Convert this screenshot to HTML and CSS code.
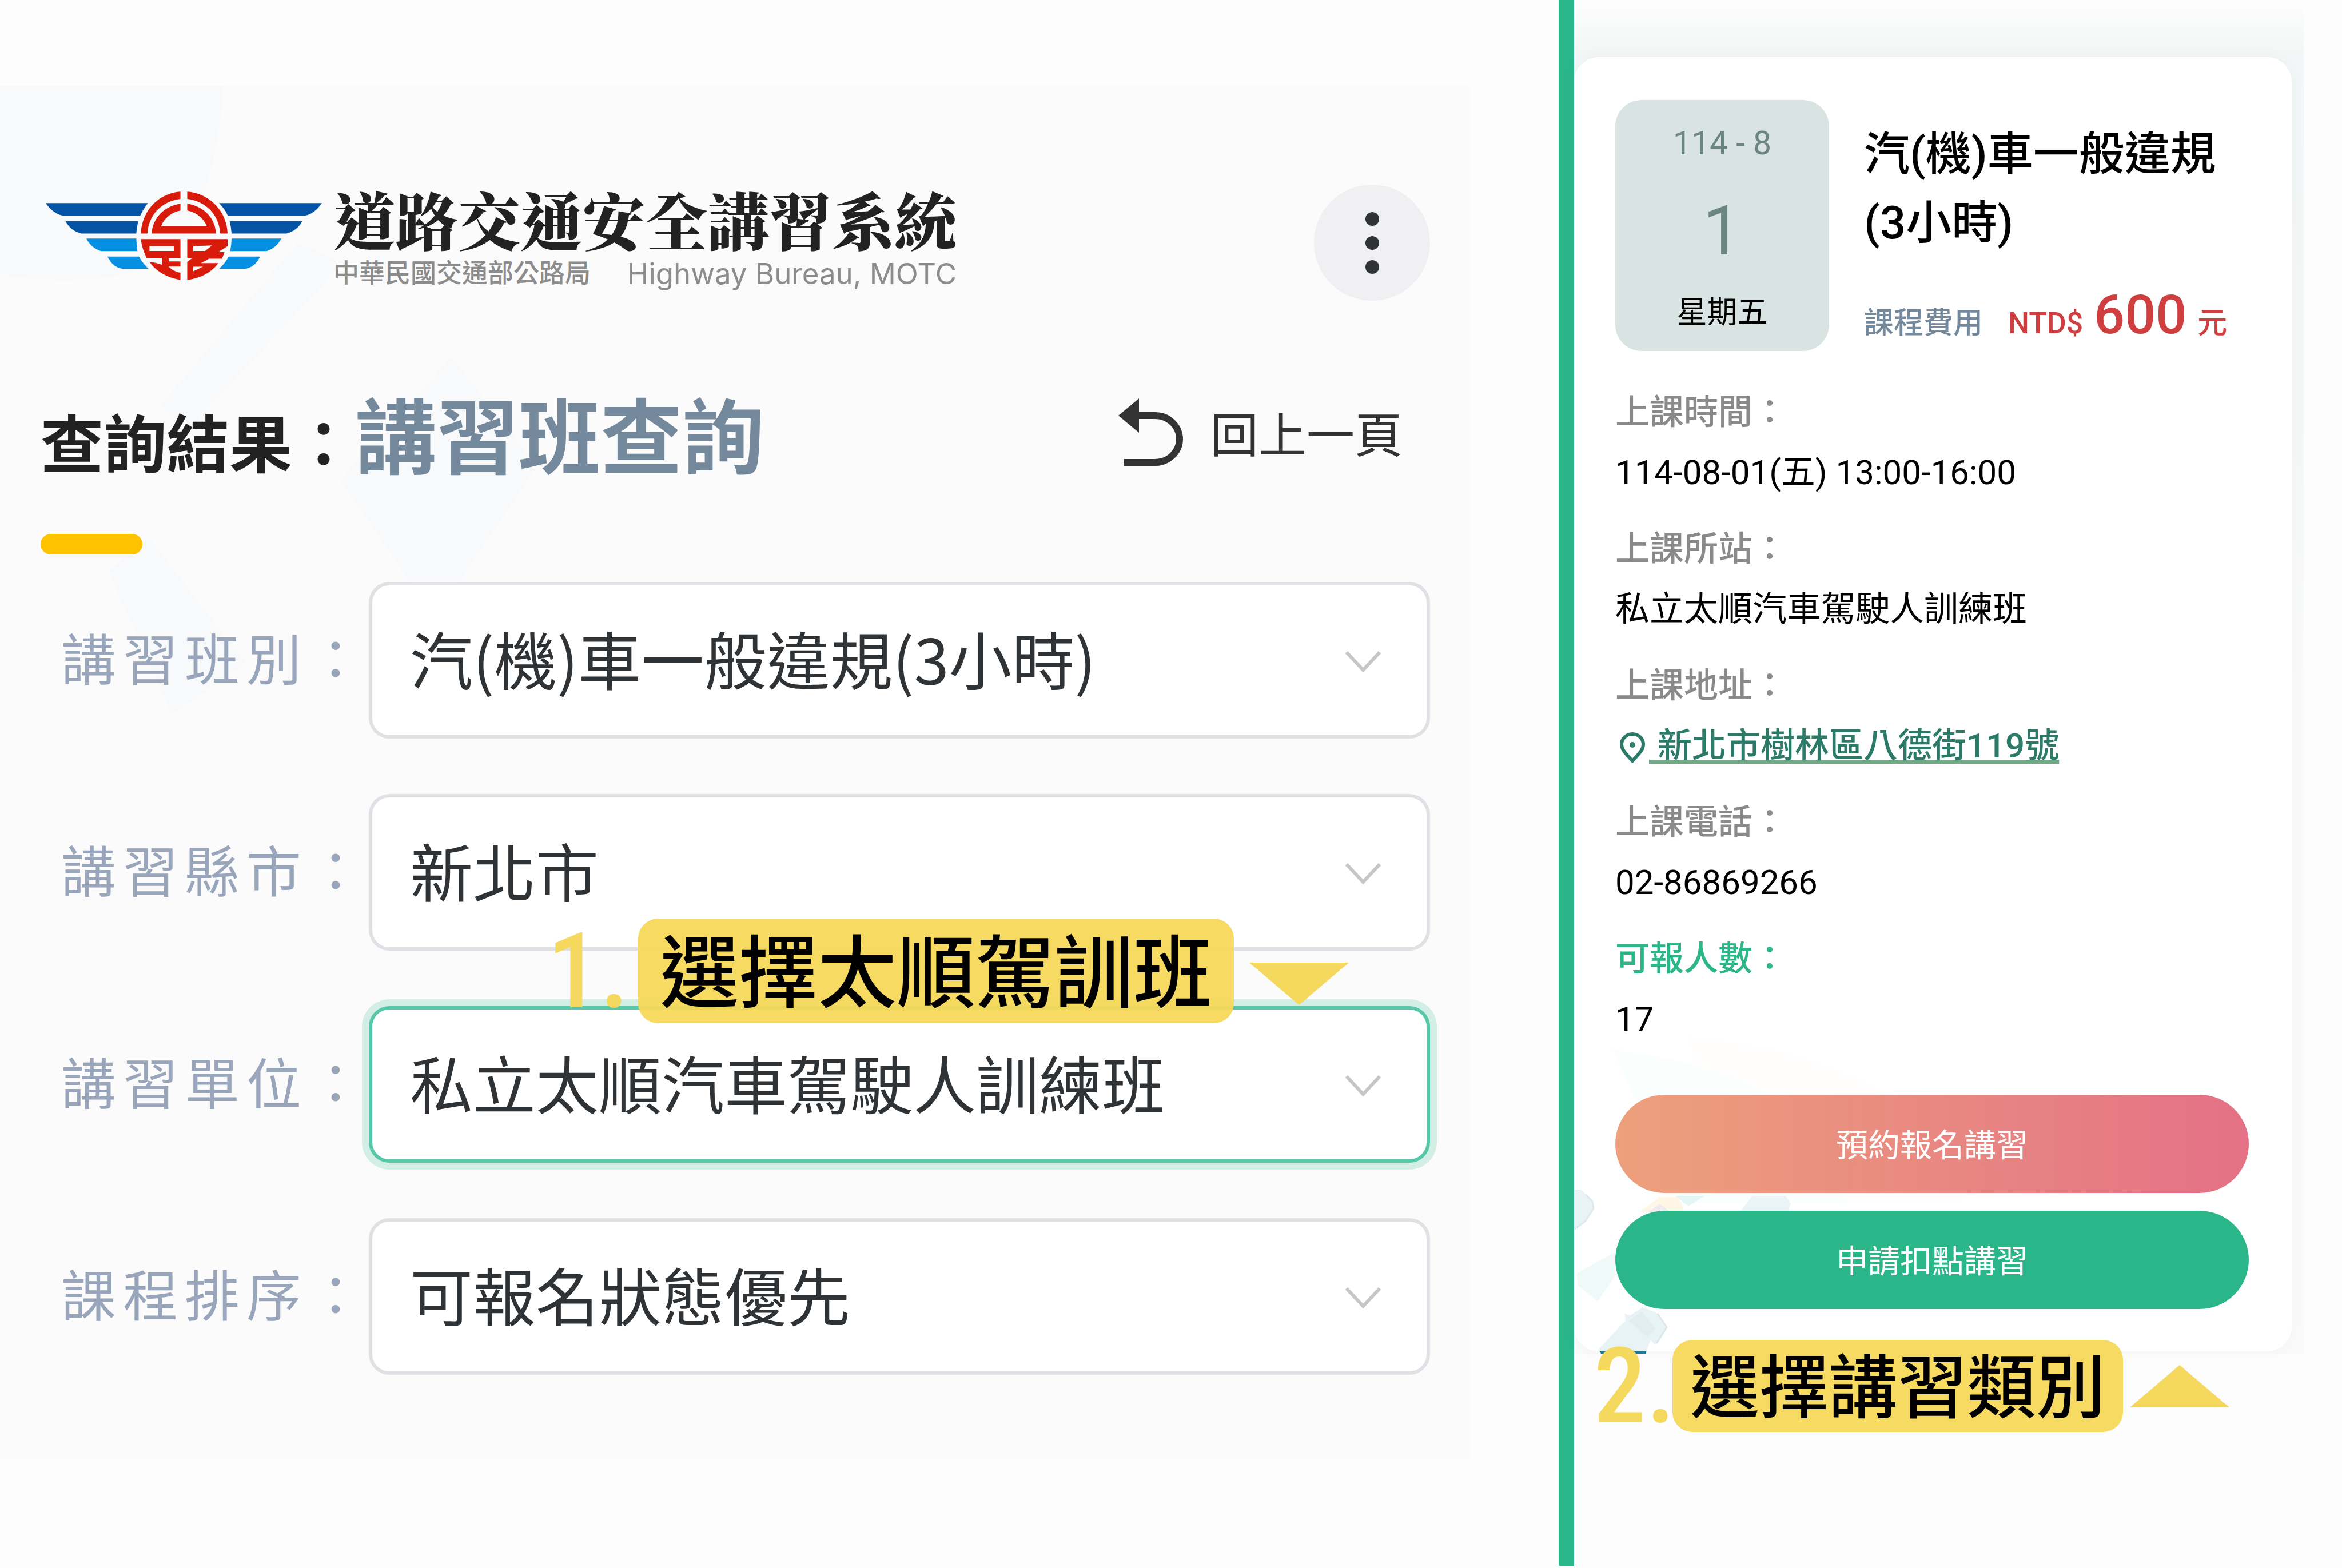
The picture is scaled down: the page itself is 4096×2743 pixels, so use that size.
FILE: index.html
```html
<!DOCTYPE html>
<html lang="zh-Hant">
<head>
  <meta charset="UTF-8">
  <meta name="viewport" content="width=device-width, initial-scale=1">
  <title>道路交通安全講習系統</title>
  <link rel="stylesheet" href="styles.css">
</head>
<body>
  <div class="page">
    <main class="search-side">
      <div class="search-panel">
        <svg class="panel-art" viewBox="0 0 2571 2403" preserveAspectRatio="xMinYMin slice" aria-hidden="true">
          <path d="M0 0H390Q380 190 300 300Q180 360 0 330Z"/>
          <path d="M520 275L600 310L330 600L280 560Z"/>
          <path d="M790 475L935 660L930 680L760 930L595 690Z"/>
          <path d="M260 790L430 1010L300 1100L190 850Z"/>
        </svg>
        <header class="header">
          <svg class="logo" viewBox="73 111 1382 510" preserveAspectRatio="none" role="img" aria-label="公路局">
            <g fill="#0453a4">
              <path d="M73 178H585Q560 212 546 250H160Q110 240 73 178Z"/>
              <path d="M1455 178H940Q970 212 984 250H1370Q1418 240 1455 178Z"/>
              <path d="M172 281H536Q528 315 526 353H250Q196 335 172 281Z"/>
              <path d="M1357 281H993Q1001 315 1003 353H1278Q1333 335 1357 281Z"/>
            </g>
            <g fill="#0590e2">
              <path d="M276 382H526Q527 418 532 454H350Q302 438 276 382Z"/>
              <path d="M1252 382H1003Q1002 418 996 454H1178Q1226 438 1252 382Z"/>
              <path d="M382 485H540Q556 522 588 556H460Q410 550 382 485Z"/>
              <path d="M1146 485H988Q972 522 940 556H1068Q1118 550 1146 485Z"/>
            </g>
            <g fill="#d91b0c">
              <path d="M747 112V154C650 168 586 250 582 353H549C553 220 640 120 747 112Z"/>
              <path d="M781 112V154C878 168 942 250 946 353H983C979 220 888 120 781 112Z"/>
              <path d="M747 181V220C700 230 664 266 650 312H880C864 266 828 230 781 220V181C860 194 922 262 925 353H603C608 262 668 194 747 181Z"/>
              <path fill-rule="evenodd" d="M549 385H747V493H688V513H747V543H688Q710 572 747 578V620C680 608 620 566 592 516Q622 520 655 532V493H578Q554 440 549 385ZM592 425V453H714V425Z"/>
              <path fill-rule="evenodd" d="M781 385H983V425L936 460H968L955 498H890L850 523H936C905 575 850 610 781 620V516L808 493H781ZM811 425V453H870L906 421ZM811 544V570L860 544Z"/>
            </g>
          </svg>
          <div class="brand">
            <h1 class="brand-name">道路交通安全講習系統</h1>
            <p class="brand-sub"><span>中華民國交通部公路局</span> <span class="brand-en" lang="en">Highway Bureau, MOTC</span></p>
          </div>
          <button class="menu-btn" type="button" aria-label="選單">
            <span class="dot"></span><span class="dot"></span><span class="dot"></span>
          </button>
        </header>

        <div class="title-row">
          <h2 class="title">查詢結果：<span class="title-main">講習班查詢</span></h2>
          <a class="back-link" href="#">
            <svg class="back-icon" viewBox="0 0 113 119" aria-hidden="true">
              <path d="M0 30L36 0V60Z" fill="#333"/>
              <path d="M34 30H64A43 41 0 0 1 64 112H10" fill="none" stroke="#333" stroke-width="12"/>
            </svg>
            <span>回上一頁</span>
          </a>
        </div>
        <div class="title-bar"></div>

        <form class="fields">
          <div class="field">
            <label for="courseType">講習班別：</label>
            <div class="select-wrap">
              <select id="courseType"><option>汽(機)車一般違規(3小時)</option></select>
              <svg class="chevron" viewBox="0 0 64 38" aria-hidden="true"><path d="M3 3L32 34L61 3"/></svg>
            </div>
          </div>
          <div class="field">
            <label for="city">講習縣市：</label>
            <div class="select-wrap">
              <select id="city"><option>新北市</option></select>
              <svg class="chevron" viewBox="0 0 64 38" aria-hidden="true"><path d="M3 3L32 34L61 3"/></svg>
            </div>
          </div>
          <div class="field">
            <label for="unit">講習單位：</label>
            <div class="select-wrap">
              <select id="unit" class="focused"><option>私立太順汽車駕駛人訓練班</option></select>
              <svg class="chevron" viewBox="0 0 64 38" aria-hidden="true"><path d="M3 3L32 34L61 3"/></svg>
              <div class="note note-unit">
                <span class="note-num">1.</span>
                <span class="note-text">選擇太順駕訓班</span>
                <svg class="note-arrow" viewBox="0 0 174 74" aria-hidden="true"><path d="M0 0H174L87 74Z"/></svg>
              </div>
            </div>
          </div>
          <div class="field">
            <label for="sort">課程排序：</label>
            <div class="select-wrap">
              <select id="sort"><option>可報名狀態優先</option></select>
              <svg class="chevron" viewBox="0 0 64 38" aria-hidden="true"><path d="M3 3L32 34L61 3"/></svg>
            </div>
          </div>
        </form>
      </div>
    </main>

    <div class="divider"></div>

    <aside class="course-side">
      <div class="course-bg">
        <article class="card">
          <svg class="card-art" viewBox="0 0 700 560" aria-hidden="true">
            <path d="M200 10Q640 60 676 300H300Z" fill="#fffefc"/>
            <path d="M68 33Q460 80 477 300H190Z" fill="#fafefc"/>
            <path d="M4 424L71 387V430L41 472L7 445Z" fill="#eff9f8"/>
            <path d="M177 288H228L200 306Z" fill="#e4f6f6"/>
            <!-- cars -->
            <path d="M114 316L150 290H180Q190 300 192 316Z" fill="#fff6e6"/>
            <path d="M130 316L150 302L168 316Z" fill="#eeeaf0"/>
            <path d="M0 277H12L30 295L34 310L20 330L0 347Z" fill="#e9f3f5"/>
            <path d="M20 285L32 298L34 310L20 332L0 347" fill="none" stroke="#dfe9ef" stroke-width="3"/>
            <path d="M290 316L312 288H370L379 302L374 316Z" fill="#ebf4f6"/>
            <path d="M44 555L90 506L88 494L98 497L120 483L147 494L163 518L147 545L141 549L134 540L126 560H46Z" fill="#e8f3f5"/>
            <path d="M96 507L118 490L142 520L128 535Z" fill="#e2edf1"/>
            <path d="M146 494L162 518L144 546" fill="none" stroke="#dde7ed" stroke-width="3"/>
            <path d="M45 560H126V564H47Z" fill="#1b7a93"/>
          </svg>
          <div class="course-head">
            <time class="date" datetime="2025-08-01">
              <span class="date-month">114 - 8</span>
              <span class="date-day">1</span>
              <span class="date-week">星期五</span>
            </time>
            <div class="course-info">
              <h3 class="course-title">汽(機)車一般違規(3小時)</h3>
              <p class="fee"><span class="fee-label">課程費用</span><span class="fee-price">NTD$ <strong>600</strong> 元</span></p>
            </div>
          </div>
          <dl class="details">
            <div><dt>上課時間：</dt><dd>114-08-01(五) 13:00-16:00</dd></div>
            <div><dt>上課所站：</dt><dd>私立太順汽車駕駛人訓練班</dd></div>
            <div>
              <dt>上課地址：</dt>
              <dd class="address">
                <svg class="pin" viewBox="0 0 46 54" aria-hidden="true">
                  <path d="M23 50C12 38 4 31 4 21A19 18 0 0 1 42 21C42 31 34 38 23 50Z" fill="none" stroke="#2c7a68" stroke-width="6"/>
                  <circle cx="23" cy="22" r="5" fill="#2c7a68"/>
                </svg>
                <a href="#">&nbsp;新北市樹林區八德街119號</a>
              </dd>
            </div>
            <div><dt>上課電話：</dt><dd>02-86869266</dd></div>
            <div><dt class="green">可報人數：</dt><dd>17</dd></div>
          </dl>
          <div class="actions">
            <button class="btn btn-book" type="button">預約報名講習</button>
            <button class="btn btn-apply" type="button">申請扣點講習</button>
          </div>
          <div class="note note-type">
            <span class="note-num">2.</span>
            <span class="note-text">選擇講習類別</span>
            <svg class="note-arrow" viewBox="0 0 174 74" aria-hidden="true"><path d="M0 74H174L87 0Z"/></svg>
          </div>
        </article>
      </div>
    </aside>
  </div>
</body>
</html>
```

FILE: styles.css
```css
* { box-sizing: border-box; }
body { margin: 0; background: #fdfdfd; color: #000; font-family: "Noto Sans CJK TC", "Noto Sans", sans-serif; }
h1, h2, h3, p, dl, dd { margin: 0; }
.page { display: grid; grid-template-columns: 2726fr 27px 1343fr; min-height: 100vh; }
.divider { background: #2bb68a; margin-bottom: 4px; }

/* search panel */
.search-side { padding: 150px 155px 190px 0; }
.search-panel { position: relative; height: 100%; padding: 173px 70px 0 71px; background: #fbfbfc; }
.panel-art { position: absolute; left: 0; top: 0; width: 100%; height: 100%; fill: #f8f9fa; }
.header { position: relative; display: flex; align-items: flex-start; padding-left: 9px; }
.logo { width: 483px; height: 155px; margin-top: 12px; }
.brand { margin-left: 20px; }
.brand-name { padding-top: 15px; font-family: "Liberation Serif", "Noto Serif CJK TC", "Noto Sans CJK TC", serif; font-weight: 900; font-size: 109px; line-height: 110px; color: #222; }
.brand-sub { display: flex; justify-content: space-between; font-family: "Liberation Sans", "Noto Sans CJK TC", sans-serif; font-size: 45px; line-height: 62px; font-weight: 500; color: #8c8c8c; }
.brand-en { font-family: Inter, sans-serif; font-weight: 400; font-size: 51px; }
.menu-btn { margin-left: auto; width: 203px; height: 203px; border: none; border-radius: 50%; background: #f0f0f2; display: flex; flex-direction: column; align-items: center; justify-content: center; gap: 18px; padding: 0; }
.dot { width: 24px; height: 24px; border-radius: 50%; background: #2f3336; }

.title-row { position: relative; display: flex; justify-content: space-between; align-items: center; margin-top: 150px; padding-right: 48px; }
.title { font-size: 110px; line-height: 160px; font-weight: 700; color: #222; }
.title-main { font-size: 143px; color: #74899c; }
.back-link { display: flex; align-items: center; gap: 48px; padding-bottom: 14px; font-size: 84px; line-height: 120px; color: #333; text-decoration: none; }
.back-icon { width: 113px; height: 119px; }
.title-bar { position: relative; width: 178px; height: 36px; margin-top: 84px; border-radius: 18px; background: #ffc300; }

.fields { position: relative; display: flex; flex-direction: column; gap: 97px; margin-top: 48px; }
.field { display: grid; grid-template-columns: 538px 1fr; align-items: center; margin-left: 36px; }
.field label { font-size: 96px; line-height: 120px; letter-spacing: 12px; white-space: nowrap; color: #98a5ba; padding-bottom: 14px; }
.select-wrap { position: relative; }
.field select { display: block; appearance: none; width: 100%; height: 274px; padding: 0 160px 10px 66px; border: 6px solid #e0e0e5; border-radius: 36px; background: #fff; color: #303336; font-family: inherit; font-size: 110px; }
.field select.focused { border-color: #57c8a7; box-shadow: 0 0 0 12px #d3eee5; }
.chevron { position: absolute; right: 85px; top: 120px; width: 64px; height: 38px; fill: none; stroke: #c6c6c6; stroke-width: 6px; pointer-events: none; }

/* yellow step notes */
.note { position: absolute; display: flex; align-items: center; white-space: nowrap; font-family: "Noto Sans CJK TC", sans-serif; }
.note-num { width: 115px; font-family: "Roboto Condensed", "Liberation Sans Narrow", sans-serif; font-size: 184px; line-height: 160px; font-weight: 500; color: #f5d95f; }
.note-text { border-radius: 35px; background: rgba(245, 216, 88, 0.95); font-weight: 500; color: #000; }
.note-arrow { width: 174px; height: 74px; fill: #f5d95f; }
.note-unit { left: 312px; top: -153px; }
.note-unit .note-text { margin: 0 27px 0 44px; padding: 0 38px 14px; font-size: 138px; line-height: 169px; }
.note-unit .note-arrow { margin-top: 44px; }
.note-type { left: 34px; bottom: -141px; }
.note-type .note-text { margin: 0 12px 0 23px; padding: 0 31px 14px; font-size: 121px; line-height: 147px; }

/* course card */
.course-side { padding-right: 67px; }
.course-bg { padding: 100px 21px 4px 0; background: linear-gradient(#fdfdfd, #f3f6f6 100px, #f5f7f7 30%, #fafafa 50%); }
.card { position: relative; padding: 75px 75px 74px 72px; border-radius: 43px; background: #fff; box-shadow: 0 0 30px rgba(0, 0, 0, 0.03); font-family: Roboto, "Noto Sans CJK TC", sans-serif; }
.card-art { position: absolute; left: 0; bottom: 0; width: 700px; height: 560px; overflow: visible; }
.course-head { display: flex; gap: 61px; }
.date { display: flex; flex-direction: column; align-items: center; width: 374px; height: 439px; padding-top: 36px; border-radius: 46px; background: #d9e3e1; color: #6b8580; }
.date-month { font-size: 57px; line-height: 80px; }
.date-day { padding-top: 10px; font-size: 120px; line-height: 206px; }
.date-week { font-size: 53px; line-height: 80px; color: #000; }
.course-info { flex: 1; padding-top: 35px; }
.course-title { font-size: 80px; line-height: 120px; font-weight: 500; max-width: 640px; }
.fee { display: flex; align-items: baseline; gap: 44px; margin-top: 46px; white-space: nowrap; font-size: 52px; line-height: 110px; }
.fee-label { color: #74899c; font-weight: 500; }
.fee-price { color: #cf3f40; font-weight: 500; }
.fee-price strong { margin: 0 6px; font-size: 95px; font-weight: 500; }
.details { position: relative; display: flex; flex-direction: column; gap: 29px; margin-top: 48px; font-size: 60px; line-height: 105px; }
.details dt { color: #8a8a8a; font-weight: 500; }
.details dt.green { color: #2bb68a; }
.address { display: flex; align-items: center; padding-left: 7px; }
.pin { width: 46px; height: 54px; margin: 6px 6px 0 0; }
.address a { color: #2c7a68; font-weight: 500; text-decoration: underline #6fa988 7px; text-underline-offset: 4px; text-decoration-skip-ink: none; }
.actions { position: relative; display: flex; flex-direction: column; gap: 31px; margin-top: 80px; }
.btn { height: 172px; padding: 0 0 6px; border: none; border-radius: 86px; color: #fff; font-family: inherit; font-size: 56px; }
.btn-book { background: linear-gradient(90deg, #eda07c, #e47186); }
.btn-apply { background: #2bb68a; }
```
